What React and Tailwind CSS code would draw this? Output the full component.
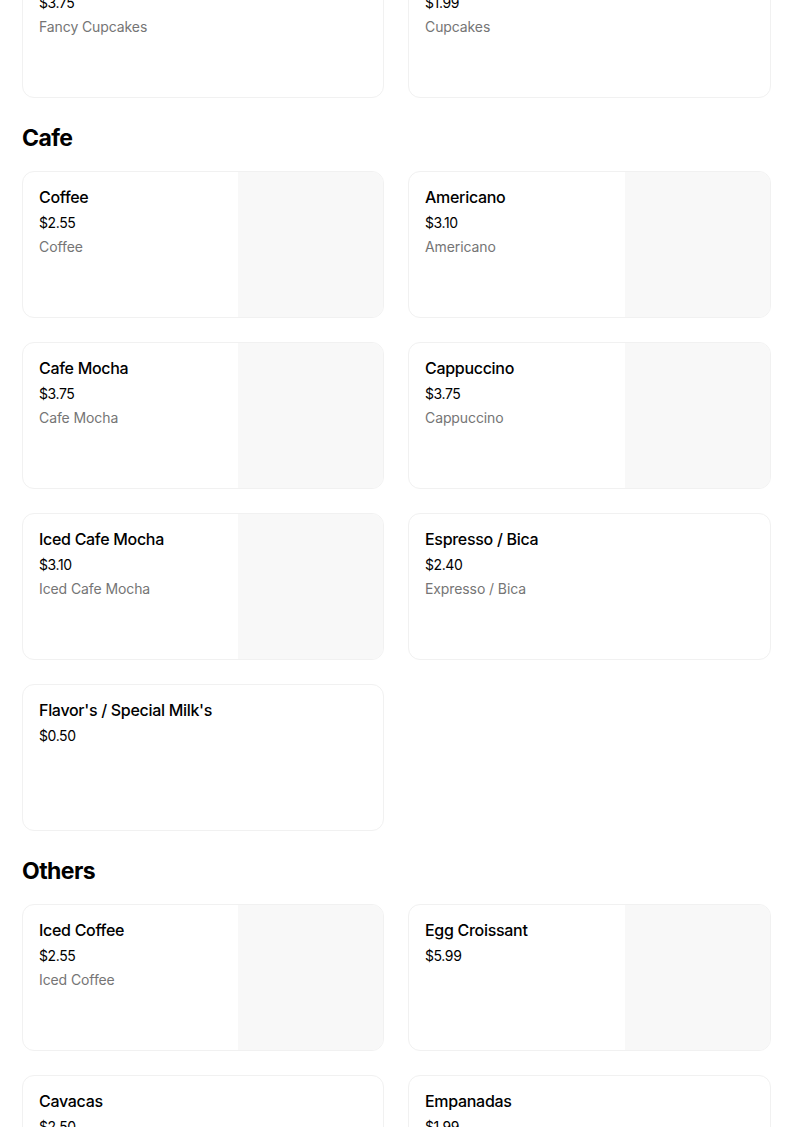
import React from "react";

const sections = [
  {
    title: null,
    items: [
      { name: "Fancy Cupcakes", price: "$3.75", desc: "Fancy Cupcakes", img: false },
      { name: "Cupcakes", price: "$1.99", desc: "Cupcakes", img: false },
    ],
  },
  {
    title: "Cafe",
    items: [
      { name: "Coffee", price: "$2.55", desc: "Coffee", img: true },
      { name: "Americano", price: "$3.10", desc: "Americano", img: true },
      { name: "Cafe Mocha", price: "$3.75", desc: "Cafe Mocha", img: true },
      { name: "Cappuccino", price: "$3.75", desc: "Cappuccino", img: true },
      { name: "Iced Cafe Mocha", price: "$3.10", desc: "Iced Cafe Mocha", img: true },
      { name: "Espresso / Bica", price: "$2.40", desc: "Expresso / Bica", img: false },
      { name: "Flavor's / Special Milk's", price: "$0.50", desc: null, img: false },
    ],
  },
  {
    title: "Others",
    items: [
      { name: "Iced Coffee", price: "$2.55", desc: "Iced Coffee", img: true },
      { name: "Egg Croissant", price: "$5.99", desc: null, img: true },
      { name: "Cavacas", price: "$2.50", desc: "Cavacas", img: false },
      { name: "Empanadas", price: "$1.99", desc: "Empanadas", img: false },
    ],
  },
];

function Card({ item }) {
  return (
    <div className="flex h-[147px] overflow-hidden rounded-xl border border-[#f1f1f1] bg-white">
      <div className="flex min-w-0 flex-1 flex-col px-4 pt-[15px]">
        <div className="text-[16px] font-medium leading-5 tracking-[-0.3px] text-[#000]">{item.name}</div>
        <div className="mt-[6px] text-[14px] leading-5 tracking-[-0.4px] text-[#000]">{item.price}</div>
        {item.desc && (
          <div className="mt-1 text-[14px] leading-5 tracking-[-0.1px] text-[#757575]">{item.desc}</div>
        )}
      </div>
      {item.img && <div className="w-[145px] shrink-0 bg-[#f8f8f8]" />}
    </div>
  );
}

export default function App() {
  return (
    <div
      className="min-h-screen overflow-hidden bg-white"
      style={{ fontFamily: "Inter, 'Noto Sans', Arial, sans-serif" }}
    >
      <div className="-mt-[49px] flex flex-col gap-6 pl-[22px]">
        {sections.map((s, i) => (
          <section key={i} className="flex flex-col">
            {s.title && (
              <h2 className="mb-[17px] text-[23px] font-bold leading-8 tracking-tight text-black">
                {s.title}
              </h2>
            )}
            <div className="grid grid-cols-[362px_363px] gap-6">
              {s.items.map((it) => (
                <Card key={it.name} item={it} />
              ))}
            </div>
          </section>
        ))}
      </div>
    </div>
  );
}
